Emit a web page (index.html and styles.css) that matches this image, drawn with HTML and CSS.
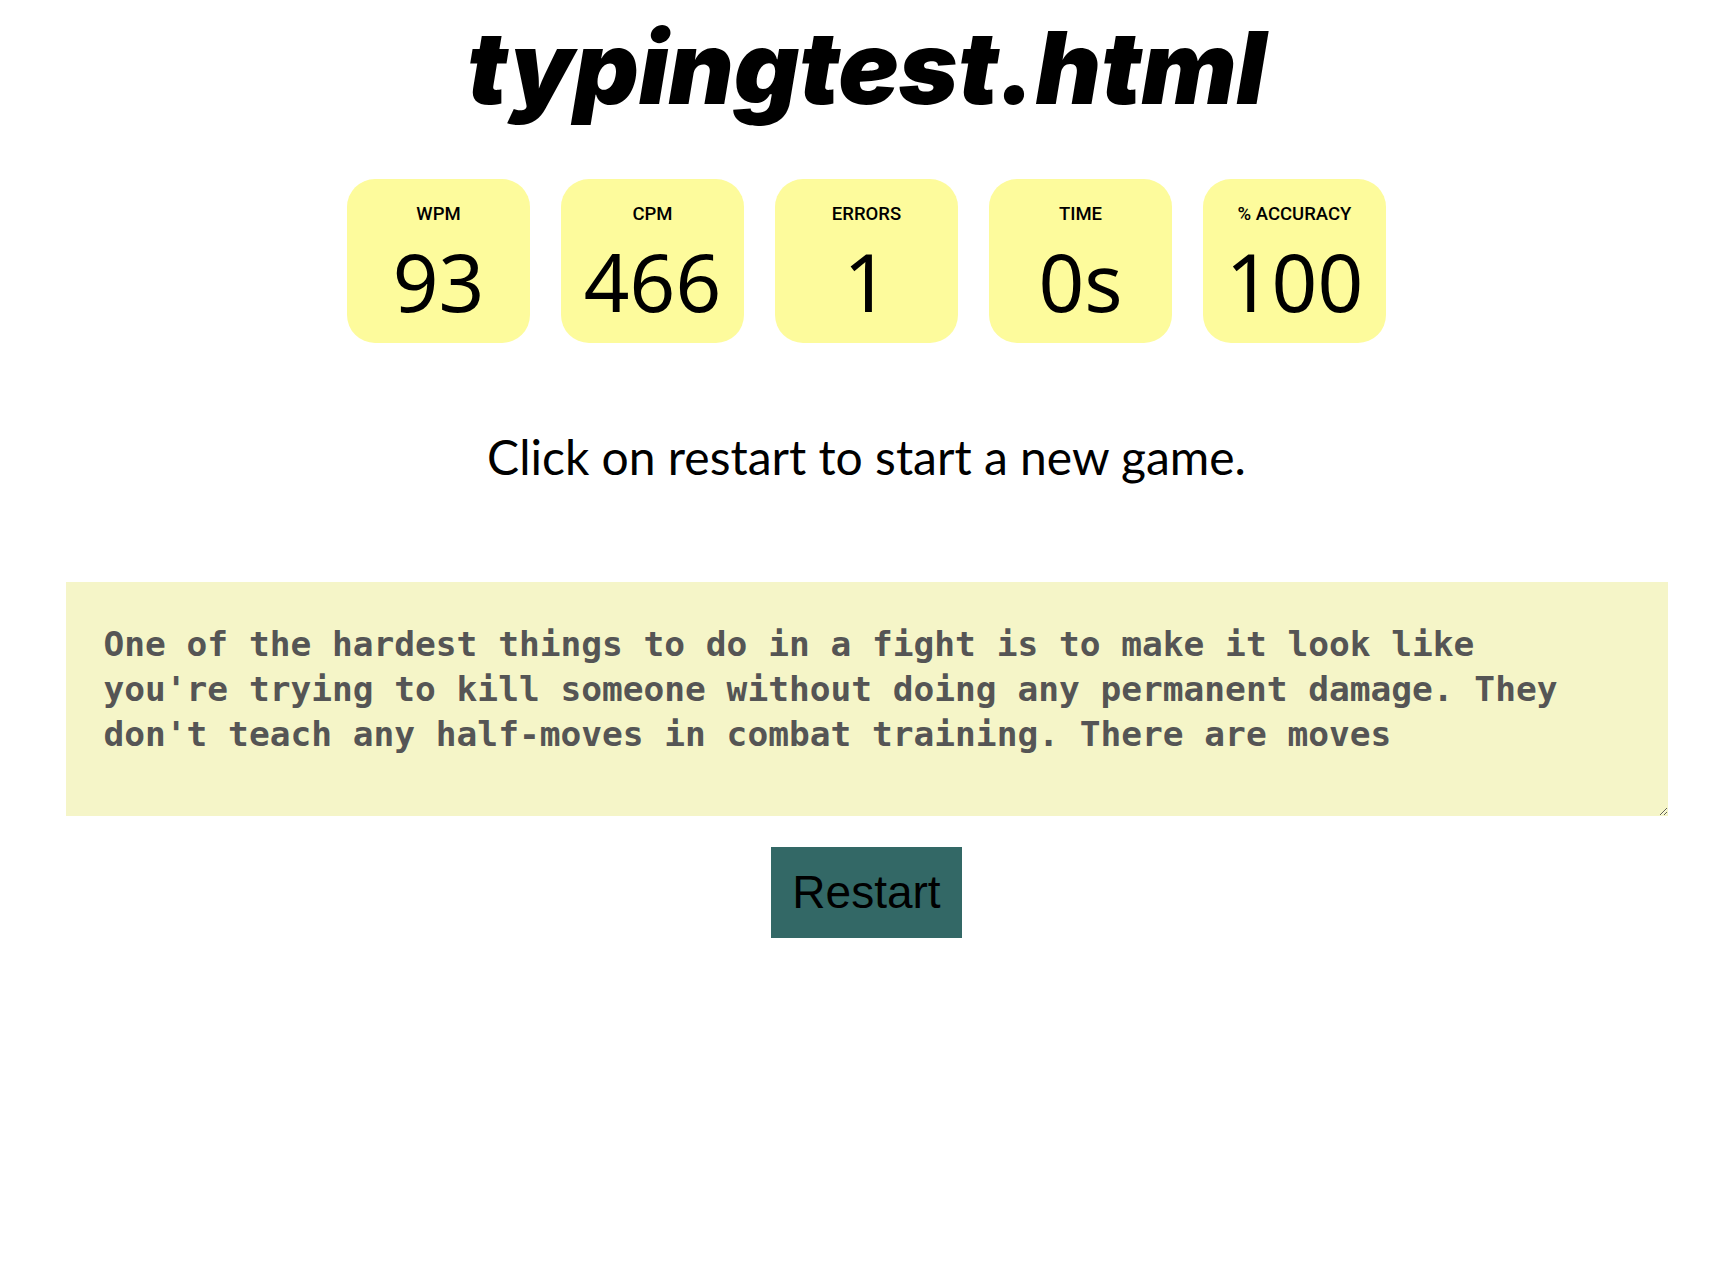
FILE: index.html
```html
<!DOCTYPE html>
<html>
<head>
<meta charset="utf-8">
<title>typingtest.html</title>
<link rel="stylesheet" href="styles.css">
</head>
<body>
<h1 class="title">typingtest.html</h1>
<div class="stats">
  <div class="stat"><div class="stat-label">WPM</div><div class="stat-value">93</div></div>
  <div class="stat"><div class="stat-label">CPM</div><div class="stat-value">466</div></div>
  <div class="stat"><div class="stat-label">ERRORS</div><div class="stat-value">1</div></div>
  <div class="stat"><div class="stat-label">TIME</div><div class="stat-value">0s</div></div>
  <div class="stat"><div class="stat-label">% ACCURACY</div><div class="stat-value">100</div></div>
</div>
<p class="message">Click on restart to start a new game.</p>
<div class="area-wrap">
<textarea class="input-area" disabled>One of the hardest things to do in a fight is to make it look like you're trying to kill someone without doing any permanent damage. They don't teach any half-moves in combat training. There are moves</textarea>
</div>
<div class="actions"><button class="restart">Restart</button></div>
</body>
</html>
```
FILE: styles.css
```css
html, body {
  margin: 0;
  padding: 0;
  background: #ffffff;
}
body {
  font-family: "Lato", "Noto Sans", sans-serif;
  color: #000;
}
.title {
  margin: 0;
  padding-top: 12px;
  text-align: center;
  font-family: "Inter", sans-serif;
  font-weight: 900;
  font-style: italic;
  font-size: 101px;
  line-height: 110px;
  letter-spacing: -0.2px;
}
.stats {
  display: flex;
  justify-content: center;
  gap: 31px;
  margin-top: 57px;
}
.stat {
  width: 183px;
  height: 164px;
  background: #fdfb9c;
  border-radius: 28px;
  display: flex;
  flex-direction: column;
  align-items: center;
  box-sizing: border-box;
  padding-top: 24px;
}
.stat-label {
  font-family: "Roboto", "Liberation Sans", sans-serif;
  font-weight: 500;
  font-size: 18.5px;
  line-height: 22px;
}
.stat-value {
  font-family: "Noto Sans", sans-serif;
  font-size: 80px;
  line-height: 84px;
  margin-top: 14px;
}
.message {
  margin: 86px 0 0;
  text-align: center;
  font-family: "Lato", sans-serif;
  font-size: 48px;
  line-height: 56px;
}
.area-wrap {
  display: flex;
  justify-content: center;
  margin-top: 97px;
}
.input-area {
  width: 1602px;
  height: 234px;
  box-sizing: border-box;
  padding: 40px 90px 38px 38px;
  border: none;
  background: #f5f5c8;
  color: #555555;
  font-family: "DejaVu Sans Mono", "Liberation Mono", monospace;
  font-weight: bold;
  font-size: 34.5px;
  line-height: 45px;
  resize: both;
  outline: none;
}
.actions {
  display: flex;
  justify-content: center;
  margin-top: 31px;
}
.restart {
  background: #336866;
  color: #000;
  border: none;
  font-family: "Liberation Sans", Arial, sans-serif;
  font-size: 46px;
  line-height: 53px;
  padding: 19px 21px;
  cursor: pointer;
}
```
